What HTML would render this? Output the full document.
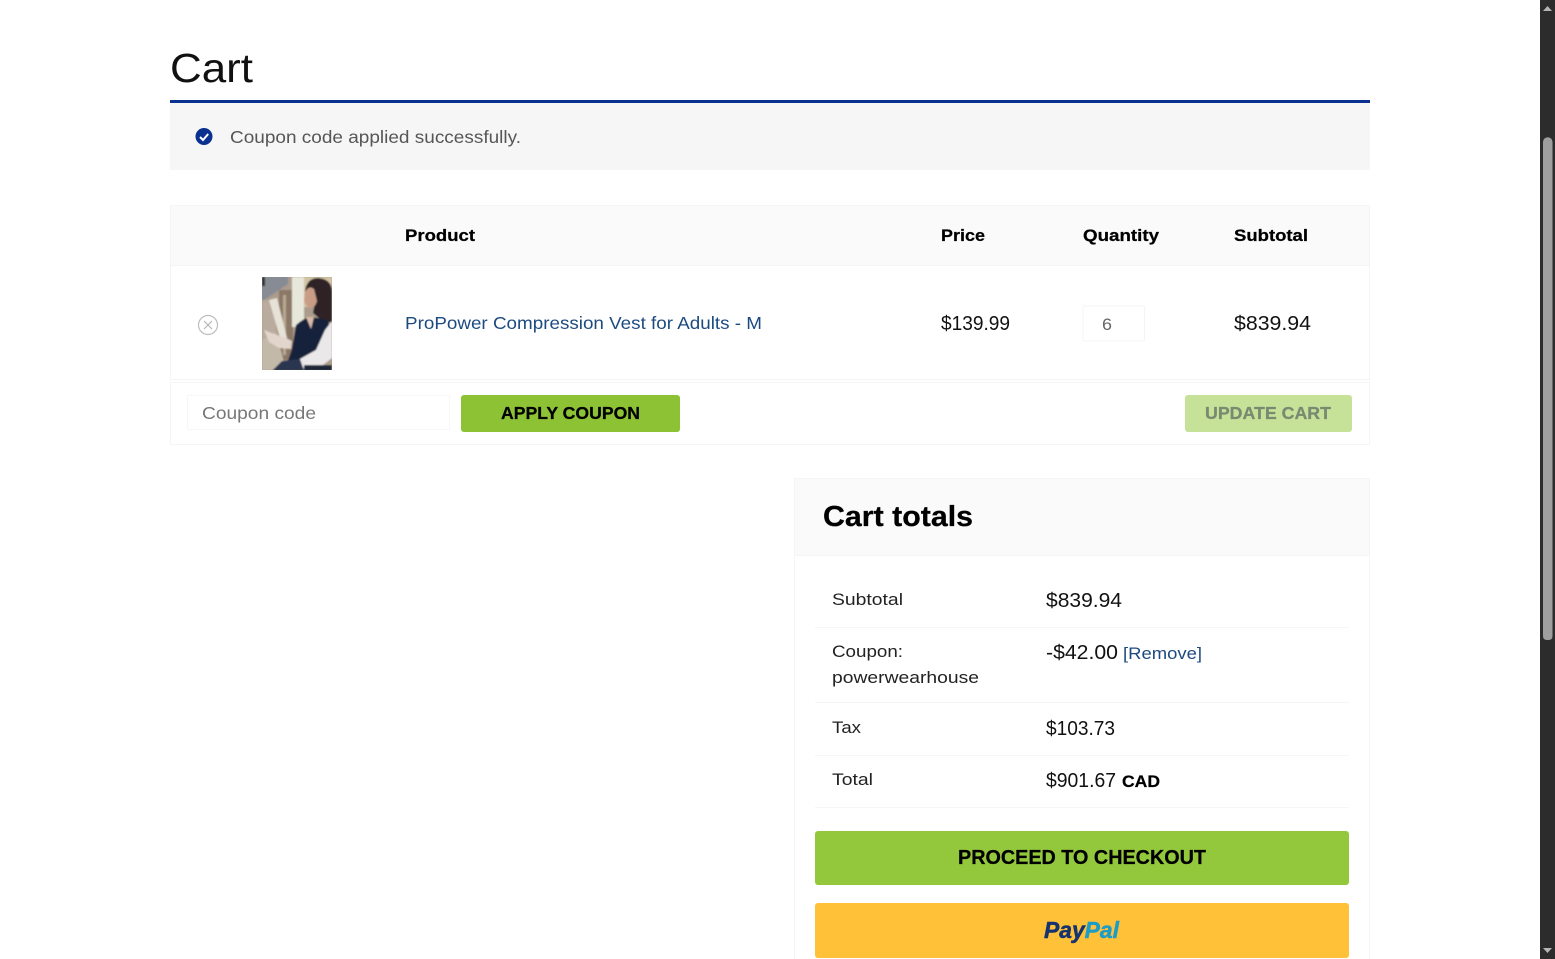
<!DOCTYPE html>
<html lang="en"><head><meta charset="utf-8"><title>Cart</title>
<style>
html,body{margin:0;padding:0;width:1555px;height:959px;overflow:hidden;background:#fff}
svg{display:block}
text{font-family:"Liberation Sans",sans-serif;fill:#111}
.b{font-weight:700;fill:#000;stroke:#000;stroke-width:.25}
</style></head><body>
<svg width="1555" height="959" viewBox="0 0 1555 959" xmlns="http://www.w3.org/2000/svg">
<defs>
<filter id="bl" x="-10%" y="-10%" width="120%" height="120%"><feGaussianBlur stdDeviation="0.8"/></filter>
<clipPath id="ph"><rect x="262" y="277" width="70" height="93"/></clipPath>
</defs>
<rect width="1555" height="959" fill="#fff"/>

<text x="170" y="82" font-size="41" textLength="83" lengthAdjust="spacingAndGlyphs">Cart</text>
<rect x="170" y="100" width="1200" height="3" fill="#0a3190"/>
<rect x="170" y="103" width="1200" height="67" fill="#f6f6f7"/>
<circle cx="204" cy="136.500" r="8.500" fill="#0a3190"/>
<path d="M200 137l3 3 5.200-6" fill="none" stroke="#fff" stroke-width="2"/>
<text x="230" y="143" font-size="17.500" style="fill:#565656" textLength="291" lengthAdjust="spacingAndGlyphs">Coupon code applied successfully.</text>

<rect x="170.500" y="205.500" width="1199" height="174" fill="#fff" stroke="#f5f5f5"/>
<rect x="171" y="206" width="1198" height="59" fill="#fafafa"/>
<rect x="171" y="265" width="1198" height="1" fill="#f5f5f5"/>
<rect x="170.500" y="382.500" width="1199" height="62" fill="#fff" stroke="#f5f5f5"/>
<text class="b" x="405" y="241" font-size="17" textLength="70" lengthAdjust="spacingAndGlyphs">Product</text>
<text class="b" x="941" y="241" font-size="17" textLength="44" lengthAdjust="spacingAndGlyphs">Price</text>
<text class="b" x="1083" y="241" font-size="17" textLength="76" lengthAdjust="spacingAndGlyphs">Quantity</text>
<text class="b" x="1234" y="241" font-size="17" textLength="74" lengthAdjust="spacingAndGlyphs">Subtotal</text>

<circle cx="208" cy="325" r="9.500" fill="none" stroke="#bdbdbd" stroke-width="1.200"/>
<path d="M204 321l8 8M212 321l-8 8" stroke="#b5b5b5" stroke-width="1.200"/>

<g clip-path="url(#ph)"><g filter="url(#bl)">
<rect x="258" y="273" width="78" height="101" fill="#ab9c8c"/>
<rect x="279" y="290" width="14" height="70" fill="#8b7866"/>
<rect x="283" y="295" width="3" height="60" fill="#b8a893"/>
<rect x="292" y="277" width="12" height="50" fill="#e8e7dc"/>
<path d="M258 272h30v12l-24 16h-6z" fill="#868b94"/>
<rect x="262" y="277" width="3" height="9" fill="#332e2c"/>
<rect x="262" y="300" width="14" height="40" fill="#b9ab9d"/>
<path d="M269 300l8-2 10 40-6 3z" fill="#e7e2d8"/>
<path d="M262 340l14-8 8 30-12 8h-10z" fill="#c3b9a8"/>
<path d="M264 330l10 4 12 4 6 3-1 8-12-1-10-6z" fill="#e2d5cc"/>
<rect x="304" y="277" width="28" height="30" fill="#d2c4a4"/>
<path d="M305 291q2-13 13-13 14 1 14 14v31l-12-4-7-6 2-12z" fill="#2d2428"/>
<path d="M305 292q4-7 9-3l3 12q-2 7-7 7-6-3-6-8z" fill="#c99d85"/>
<path d="M296 325q8-7 14-8l8 1 11 3-1 20-10 16-18 8-15 4 7-20z" fill="#16223a"/>
<path d="M306 317h8l-3 12z" fill="#d8baa9"/>
<path d="M332 321v37l-9 7-22 3-3-8 18-10 9-20z" fill="#ebe8ea"/>
<path d="M272 371l10-10 18-2 4 12z" fill="#2a3650"/>
<rect x="304" y="365" width="28" height="6" fill="#1d2538"/>
</g></g>

<text x="405" y="329" font-size="17.500" style="fill:#1c4a80" textLength="357" lengthAdjust="spacingAndGlyphs">ProPower Compression Vest for Adults - M</text>
<text x="941" y="330" font-size="20" textLength="69" lengthAdjust="spacingAndGlyphs">$139.99</text>
<rect x="1083" y="306" width="61.500" height="35" rx="1" fill="#fff" stroke="#f4f4f4"/>
<text x="1102" y="330" font-size="17" style="fill:#666" textLength="10" lengthAdjust="spacingAndGlyphs">6</text>
<text x="1234" y="330" font-size="20" textLength="77" lengthAdjust="spacingAndGlyphs">$839.94</text>

<rect x="187.500" y="395.500" width="262" height="34" fill="#fff" stroke="#f7f7f7"/>
<text x="202" y="419" font-size="17.500" style="fill:#777" textLength="114" lengthAdjust="spacingAndGlyphs">Coupon code</text>
<rect x="461" y="395" width="219" height="37" rx="3" fill="#8cc234"/>
<text class="b" x="501" y="419" font-size="17.500" textLength="139" lengthAdjust="spacingAndGlyphs">APPLY COUPON</text>
<rect x="1185" y="395" width="167" height="37" rx="3" fill="#c6e299"/>
<text class="b" x="1205" y="419" font-size="17.500" style="fill:#788a70;stroke:#788a70" textLength="126" lengthAdjust="spacingAndGlyphs">UPDATE CART</text>

<rect x="794.500" y="478.500" width="575" height="490" fill="#fff" stroke="#f5f5f5"/>
<rect x="795" y="479" width="574" height="76" fill="#fafafa"/>
<rect x="795" y="555" width="574" height="1" fill="#f6f6f6"/>
<text class="b" x="823" y="526" font-size="29" textLength="150" lengthAdjust="spacingAndGlyphs">Cart totals</text>

<text x="832" y="605" font-size="17" style="fill:#222" textLength="71" lengthAdjust="spacingAndGlyphs">Subtotal</text>
<text x="1046" y="607" font-size="20" textLength="76" lengthAdjust="spacingAndGlyphs">$839.94</text>
<rect x="815" y="627" width="534" height="1" fill="#f6f6f6"/>
<text x="832" y="657" font-size="17" style="fill:#222" textLength="71" lengthAdjust="spacingAndGlyphs">Coupon:</text>
<text x="832" y="683" font-size="17" style="fill:#222" textLength="147" lengthAdjust="spacingAndGlyphs">powerwearhouse</text>
<text x="1046" y="659" font-size="20" textLength="72" lengthAdjust="spacingAndGlyphs">-$42.00</text>
<text x="1123" y="659" font-size="17" style="fill:#1c4a80" textLength="79" lengthAdjust="spacingAndGlyphs">[Remove]</text>
<rect x="815" y="702" width="534" height="1" fill="#f6f6f6"/>
<text x="832" y="733" font-size="17" style="fill:#222" textLength="29" lengthAdjust="spacingAndGlyphs">Tax</text>
<text x="1046" y="735" font-size="20" textLength="69" lengthAdjust="spacingAndGlyphs">$103.73</text>
<rect x="815" y="755" width="534" height="1" fill="#f6f6f6"/>
<text x="832" y="785" font-size="17" style="fill:#222" textLength="41" lengthAdjust="spacingAndGlyphs">Total</text>
<text x="1046" y="787" font-size="20" textLength="70" lengthAdjust="spacingAndGlyphs">$901.67</text>
<text class="b" x="1122" y="787" font-size="17" textLength="38" lengthAdjust="spacingAndGlyphs">CAD</text>
<rect x="815" y="807" width="534" height="1" fill="#f6f6f6"/>

<rect x="815" y="831" width="534" height="54" rx="3" fill="#93c83d"/>
<text class="b" x="958" y="864" font-size="20" textLength="248" lengthAdjust="spacingAndGlyphs">PROCEED TO CHECKOUT</text>
<rect x="815" y="903" width="534" height="55" rx="3" fill="#ffc137"/>
<text x="1044" y="938" font-size="23" font-weight="700" font-style="italic" textLength="75" lengthAdjust="spacingAndGlyphs"><tspan style="fill:#14336f;stroke:#14336f;stroke-width:.5">Pay</tspan><tspan style="fill:#1d9cc9;stroke:#1d9cc9;stroke-width:.5">Pal</tspan></text>

<rect x="1540" width="15" height="959" fill="#2c2c2c"/>
<path d="M1543 142a4.750 4.750 0 0 1 9.500 0v494q0 4-4 4h-1.500q-4 0-4-4z" fill="#9f9f9f"/>
<path d="M1547.500 6l4.500 5h-9z" fill="#b5b5b5"/>
<path d="M1547.500 953l4.500-5h-9z" fill="#b5b5b5"/>
</svg>
</body></html>
